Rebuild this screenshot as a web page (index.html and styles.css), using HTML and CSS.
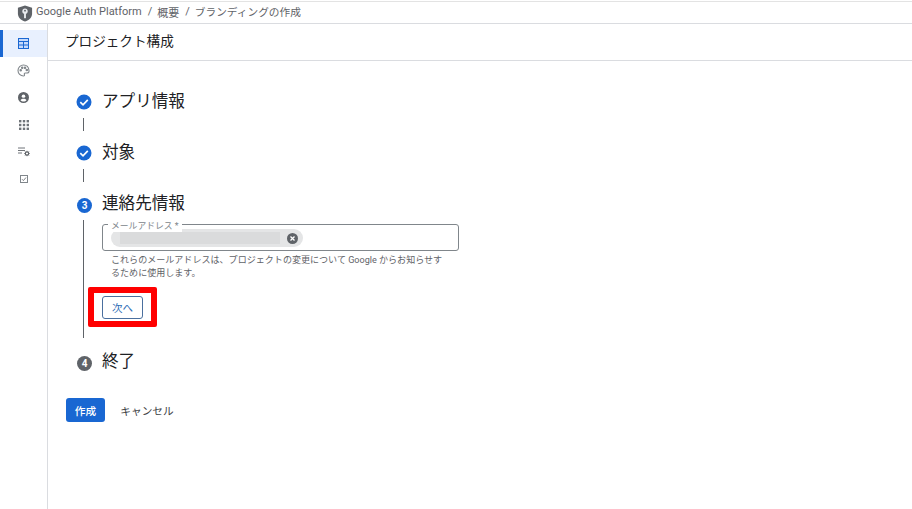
FILE: index.html
```html
<!DOCTYPE html>
<html lang="ja">
<head>
<meta charset="utf-8">
<title>プロジェクト構成</title>
<link rel="stylesheet" href="styles.css">
</head>
<body>
<div class="page">
  <header class="crumbs">
    <svg class="shield" width="16" height="17" viewBox="0 0 16 18"><path d="M8 0.500 15.500 3v6c0 4-3 7.300-7.500 8.500C3.500 16.300.5 13 .5 9V3z" fill="#5f6368"/><circle cx="8" cy="6.500" r="2.800" fill="#e8eaed"/><rect x="7" y="8" width="2" height="6" fill="#e8eaed"/><circle cx="8" cy="6" r="1" fill="#5f6368"/></svg>
    <span class="crumb">Google Auth Platform</span><span class="sep">/</span><span class="crumb">概要</span><span class="sep">/</span><span class="crumb cjk">ブランディングの作成</span>
  </header>
  <div class="body">
    <nav class="side">
      <a class="nav active"><svg width="11" height="11" viewBox="0 0 11 11" fill="#c6dafc" stroke="#1967d2" stroke-width="1"><rect x=".5" y=".5" width="10" height="10"/><path d="M.5 3.500h10M5.500 3.500v7M.5 7h10" fill="none"/></svg></a>
      <a class="nav"><svg width="13" height="13" viewBox="0 0 13 13" fill="none" stroke="#80868b" stroke-width="1.100"><path d="M6.500 1a5.500 5.500 0 0 0 0 11c1 0 1.200-.8.900-1.400-.4-.8 0-1.600 1-1.600H10c1.500 0 2.200-1 2-2.500C11.700 3 9.500 1 6.500 1z"/><circle cx="3.700" cy="6.300" r=".7" fill="#5f6368"/><circle cx="5.200" cy="3.800" r=".7" fill="#5f6368"/><circle cx="8" cy="3.800" r=".7" fill="#5f6368"/><circle cx="9.800" cy="6" r=".7" fill="#5f6368"/></svg></a>
      <a class="nav"><svg width="11" height="11" viewBox="0 0 12 12"><circle cx="6" cy="6" r="6" fill="#5f6368"/><circle cx="6" cy="4.500" r="1.900" fill="#fff"/><path d="M2.700 9c.8-1.200 2-1.700 3.300-1.700S8.500 7.800 9.300 9C8.500 9.900 7.300 10.400 6 10.400S3.500 9.900 2.700 9z" fill="#fff"/></svg></a>
      <a class="nav"><svg width="10" height="10" viewBox="0 0 10 10" fill="#6f7378"><rect width="2.400" height="2.400"/><rect x="3.800" width="2.400" height="2.400"/><rect x="7.600" width="2.400" height="2.400"/><rect y="3.800" width="2.400" height="2.400"/><rect x="3.800" y="3.800" width="2.400" height="2.400"/><rect x="7.600" y="3.800" width="2.400" height="2.400"/><rect y="7.600" width="2.400" height="2.400"/><rect x="3.800" y="7.600" width="2.400" height="2.400"/><rect x="7.600" y="7.600" width="2.400" height="2.400"/></svg></a>
      <a class="nav"><svg width="12" height="10" viewBox="0 0 12 10"><path d="M0 1h7M0 3.500h7M0 6h4" stroke="#6f7378" stroke-width="1" fill="none"/><circle cx="9" cy="6.500" r="1.700" fill="none" stroke="#5f6368" stroke-width="1.200"/><path d="M9 3.800v1M9 8.200v1M6.300 6.500h1M10.700 6.500h1M7.100 4.600l.7.7M10.200 7.700l.7.7M10.900 4.600l-.7.7M7.800 7.700l-.7.7" stroke="#5f6368" stroke-width=".9"/></svg></a>
      <a class="nav"><svg width="8" height="8" viewBox="0 0 8 8" fill="none" stroke="#80868b"><rect x=".5" y=".5" width="7" height="7"/><path d="M2 4.200 3.400 5.600 6 2.500" stroke="#5f6368" stroke-width=".8"/></svg></a>
    </nav>
    <main class="main">
      <h1 class="title">プロジェクト構成</h1>
      <div class="content">
        <section class="step">
          <div class="step-head"><svg class="badge" width="16" height="16" viewBox="0 0 16 16"><circle cx="8" cy="8" r="7.500" fill="#1967d2"/><path d="M4.300 8.200 7 10.800 11.800 5.800" fill="none" stroke="#fff" stroke-width="1.700"/></svg><h2 class="step-title">アプリ情報</h2></div>
          <div class="step-body short"></div>
        </section>
        <section class="step">
          <div class="step-head"><svg class="badge" width="16" height="16" viewBox="0 0 16 16"><circle cx="8" cy="8" r="7.500" fill="#1967d2"/><path d="M4.300 8.200 7 10.800 11.800 5.800" fill="none" stroke="#fff" stroke-width="1.700"/></svg><h2 class="step-title">対象</h2></div>
          <div class="step-body short"></div>
        </section>
        <section class="step">
          <div class="step-head"><span class="badge num blue">3</span><h2 class="step-title">連絡先情報</h2></div>
          <div class="step-body open">
            <div class="field">
              <span class="legend">メールアドレス *</span>
              <span class="chip"><span class="redact"></span><svg width="11" height="11" viewBox="0 0 11 11"><circle cx="5.500" cy="5.500" r="5.500" fill="#5f6368"/><path d="M3.500 3.500l4 4M7.500 3.500l-4 4" stroke="#fff" stroke-width="1.300"/></svg></span>
            </div>
            <p class="hint">これらのメールアドレスは、プロジェクトの変更について Google からお知らせするために使用します。</p>
            <div class="mark"><button class="next">次へ</button></div>
          </div>
        </section>
        <section class="step">
          <div class="step-head"><span class="badge num gray">4</span><h2 class="step-title">終了</h2></div>
        </section>
      </div>
      <div class="actions">
        <button class="primary">作成</button>
        <button class="cancel">キャンセル</button>
      </div>
    </main>
  </div>
</div>
</body>
</html>
```
FILE: styles.css
```css
* { box-sizing: border-box; }
html, body { margin: 0; height: 100%; background: #fff; }
body { font-family: Roboto, "Noto Sans CJK JP", sans-serif; color: #202124; overflow: hidden; }
.page { display: flex; flex-direction: column; height: 508px; border-top: 1px solid #e3e3e3; margin-top: 1px; }
.crumbs { display: flex; align-items: center; height: 22px; padding: 0 0 2px 17px; border-bottom: 1px solid #dadce0; font-size: 11px; color: #5f6368; flex: none; white-space: nowrap; }
.shield { margin: 3px 3px 0 0; }
.sep { margin: 0 5px 0 6px; }
.cjk { font-size: 10.700px; }
.body { display: flex; flex: 1; }
.side { width: 48px; border-right: 1px solid #dadce0; padding-top: 6px; flex: none; }
.nav { display: flex; align-items: center; justify-content: center; height: 27px; }
.nav.active { background: #e8f0fe; box-shadow: inset 3px 0 0 #1967d2; }
.main { flex: 1; display: flex; flex-direction: column; }
.title { margin: 0; height: 37px; padding: 7px 0 0 17px; font-size: 13.600px; font-weight: 400; line-height: 20px; border-bottom: 1px solid #dadce0; }
.content { padding: 27px 0 0 28px; }
.step-head { display: flex; align-items: center; height: 27px; }
.badge { width: 16px; height: 16px; flex: none; margin-right: 10px; }
.num { border-radius: 50%; color: #fff; font-size: 10px; font-weight: 700; display: flex; align-items: center; justify-content: center; width: 15px; height: 15px; margin: 3px 10px 0 1px; }
.blue { background: #1967d2; }
.gray { background: #5f6368; }
.step-title { margin: 0; font-size: 16.600px; font-weight: 400; line-height: 27px; white-space: nowrap; }
.step-body { margin-left: 7px; border-left: 1px solid #5f6368; }
.short { height: 13px; margin-top: 3px; margin-bottom: 8px; }
.open { margin-top: 3px; margin-bottom: 10px; height: 118px; padding: 4px 0 0 18px; }
.field { position: relative; width: 357px; height: 27px; border: 1px solid #80868b; border-radius: 3px; padding: 4px 0 0 8px; }
.legend { position: absolute; left: 5px; top: -4px; padding: 0 3px; background: #fff; font-size: 8.800px; line-height: 11px; color: #80868b; white-space: nowrap; }
.chip { display: flex; align-items: center; justify-content: space-between; width: 192px; height: 18px; padding: 0 5px 0 9px; background: #e4e5e6; border-radius: 9px; }
.redact { width: 160px; height: 12px; background: #dadbdc; }
.hint { margin: 3px 0 0 9px; width: 333px; font-size: 9.050px; line-height: 12.500px; color: #5f6368; }
.mark { width: 69px; height: 40px; margin: 8px 0 0 -14px; border: 6px solid #f00; border-radius: 2px; padding: 3px 0 0 8px; }
.next { display: block; width: 41px; height: 23px; margin: 0; padding: 0; border: 1px solid #4a6f9e; border-radius: 3px; background: #fff; color: #2f6db5; font: 400 10.500px Roboto, "Noto Sans CJK JP", sans-serif; }
.actions { display: flex; align-items: center; padding: 23px 0 0 18px; }
.primary, .cancel { height: 24px; border: 0; border-radius: 3px; padding: 0; font: 400 10.700px Roboto, "Noto Sans CJK JP", sans-serif; white-space: nowrap; }
.primary { width: 39px; background: #1967d2; color: #fff; font-weight: 500; }
.cancel { width: 54px; margin-left: 15px; background: #fff; color: #3c4043; }
```
